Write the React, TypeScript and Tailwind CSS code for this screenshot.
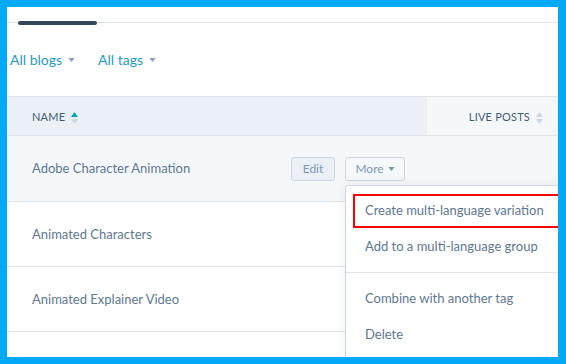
import React from 'react';

const font = { fontFamily: 'Lato, "Open Sans", sans-serif' };

function Caret({ className = '' }: { className?: string }) {
  return (
    <svg width="7" height="4" viewBox="0 0 8 5" className={className}>
      <path d="M0 0h8L4 5z" fill="currentColor" />
    </svg>
  );
}

function SortIcon({ active }: { active: boolean }) {
  return (
    <svg width="7" height="14" viewBox="0 0 7 14" className="ml-1.5">
      <path d="M0 6L3.5 1L7 6z" fill={active ? '#00a4bd' : '#cbd6e2'} />
      <path d="M0 8L3.5 13L7 8z" fill="#cbd6e2" />
    </svg>
  );
}

const rows = ['Adobe Character Animation', 'Animated Characters', 'Animated Explainer Video'];

const menu = [
  { label: 'Create multi-language variation', marked: true },
  { label: 'Add to a multi-language group' },
  { divider: true },
  { label: 'Combine with another tag' },
  { label: 'Delete' },
];

export default function App() {
  return (
    <div
      className="w-[566px] h-[364px] bg-[#02a9f7] pl-[7px] pt-[7px] pr-[8px] pb-[7px]"
      style={font}
    >
      <div className="relative w-full h-full bg-white overflow-hidden">
        {/* tabs */}
        <div className="relative h-[16px] border-b border-[#dfe3eb]">
          <div className="absolute left-[11px] top-[14px] w-[79px] h-[4px] rounded-full bg-[#33475b]" />
        </div>

        {/* filters */}
        <div className="flex items-center h-[73px] pl-[3px] gap-[23px] text-[14px] text-[#1f9cc4]">
          <button className="flex items-center gap-[6px]">
            All blogs <Caret className="text-[#8aa1b9]" />
          </button>
          <button className="flex items-center gap-[6px]">
            All tags <Caret className="text-[#8aa1b9]" />
          </button>
        </div>

        {/* header */}
        <div className="flex h-[40px] border-t border-b border-[#dfe3eb] text-[11px] tracking-[0.2px] text-[#425b76]">
          <div className="flex-1 flex items-center pl-[25px] pt-[3px] bg-[#eaf0f6]">
            NAME <SortIcon active />
          </div>
          <div className="w-[131px] flex items-center justify-end pr-[15px] pt-[3px] bg-[#f5f8fa]">
            LIVE POSTS <SortIcon active={false} />
          </div>
        </div>

        {/* rows */}
        {rows.map((name, i) => (
          <div
            key={name}
            className={`flex items-center h-[65px] pl-[25px] pt-[1px] border-b border-[#dfe3eb] text-[13px] text-[#5e7893] ${
              i === 0 ? 'bg-[#f5f8fa] h-[66px]' : 'bg-white'
            }`}
          >
            <span className="w-[259px]">{name}</span>
            {i === 0 && (
              <div className="flex items-center gap-[10px] text-[12px]">
                <button className="h-[24px] w-[44px] rounded-[3px] border border-[#cbd6e2] bg-[#eaf0f6] text-[#7c98b6]">
                  Edit
                </button>
                <button className="h-[24px] w-[60px] flex items-center justify-center gap-[4px] rounded-[3px] border border-[#cbd6e2] bg-[#f5f8fa] text-[#7c98b6]">
                  More <Caret className="text-[#7c98b6]" />
                </button>
              </div>
            )}
          </div>
        ))}

        {/* dropdown */}
        <div className="absolute left-[338px] top-[178px] w-[240px] bg-white border border-[#cbd6e2] rounded-[3px] shadow-[0_1px_12px_rgba(45,62,80,0.08)] pt-[7px] pb-[16px] text-[13px] text-[#5e7893]">
          {menu.map((m, i) =>
            m.divider ? (
              <div key={i} className="mt-[7px] mb-[8px] border-t border-[#dfe3eb]" />
            ) : (
              <div key={i} className="relative h-[36px] flex items-center pl-[19px]">
                {m.marked && (
                  <div className="absolute left-[7px] top-[1px] w-[207px] h-[34px] border-2 border-[#ff0000]" />
                )}
                {m.label}
              </div>
            )
          )}
        </div>
      </div>
    </div>
  );
}
